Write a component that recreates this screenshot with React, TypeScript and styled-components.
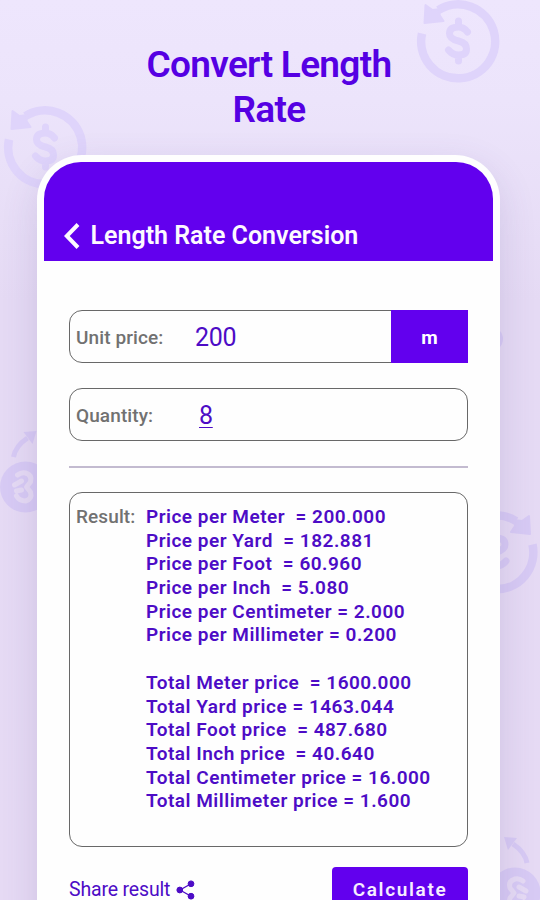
import React from "react";
import styled, { createGlobalStyle } from "styled-components";

const PURPLE = "#6200ee";
const INK = "#4d0cc6";

const GlobalStyle = createGlobalStyle`
  html, body { margin: 0; padding: 0; overflow: hidden; }
  *, *::before, *::after { box-sizing: border-box; }
`;

const Page = styled.main`
  position: relative;
  display: flex;
  flex-direction: column;
  align-items: center;
  width: 540px;
  height: 900px;
  overflow: hidden;
  font-family: Roboto, "Liberation Sans", sans-serif;
  background: linear-gradient(180deg, #eee6fd 0, #ece4fb 100px, #e5daf4 300px, #e6daf4 100%);
`;

const Decoration = styled.svg`
  position: absolute;
  inset: 0;
  width: 540px;
  height: 900px;
`;

const Headline = styled.h1`
  position: relative;
  flex-shrink: 0;
  margin: 42px 2px 0 0;
  width: 280px;
  height: 113px;
  text-align: center;
  font-size: 37px;
  line-height: 45px;
  font-weight: 600;
  letter-spacing: -0.7px;
  color: #5500e3;
`;

const Phone = styled.section`
  position: relative;
  display: flex;
  flex-direction: column;
  width: 463px;
  height: 800px;
  flex-shrink: 0;
  margin-right: 3px;
  padding: 7px 7px 0;
  background: #fefefe;
  border-radius: 45px 45px 0 0;
  box-shadow: 0 12px 36px rgba(90, 70, 140, 0.16);
`;

const AppBar = styled.header`
  display: flex;
  align-items: flex-end;
  height: 99px;
  padding: 0 0 9px 18px;
  gap: 9.5px;
  background: ${PURPLE};
  border-radius: 37px 37px 0 0;
`;

const BackIcon = styled.svg`
  width: 19px;
  height: 32px;
`;

const Title = styled.h2`
  margin: 0;
  font-size: 25px;
  line-height: 32px;
  font-weight: 600;
  color: #fdf9ff;
  white-space: nowrap;
`;

const Content = styled.div`
  display: flex;
  flex-direction: column;
  padding: 49px 25px 0 25px;
`;

const Label = styled.span<{ $width: number }>`
  width: ${(p) => p.$width}px;
  flex-shrink: 0;
  font-size: 19px;
  line-height: 24px;
  font-weight: 500;
  letter-spacing: 0.1px;
  color: #717171;
  white-space: nowrap;
`;

const Value = styled.span<{ $underlined?: boolean }>`
  flex: 1;
  font-size: 25px;
  line-height: 30px;
  letter-spacing: -0.3px;
  color: ${INK};
  text-decoration: ${(p) => (p.$underlined ? "underline" : "none")};
  text-decoration-thickness: 1px;
  text-underline-offset: 3px;
`;

const Field = styled.div`
  display: flex;
  align-items: center;
  height: 53px;
  margin-bottom: 25px;
  padding-left: 6px;
  border: 1.5px solid #686868;
  border-radius: 13px;

  ${Label}, ${Value} {
    padding-top: 2px;
  }
`;

const Unit = styled.div`
  display: flex;
  align-items: center;
  justify-content: center;
  width: 77px;
  height: 53px;
  padding-top: 2px;
  margin-right: -1px;
  flex-shrink: 0;
  background: ${PURPLE};
  color: #fff;
  font-size: 19px;
  font-weight: 700;
`;

const Divider = styled.hr`
  width: 100%;
  height: 2px;
  margin: 0 0 24px;
  border: 0;
  background: #c3bbd0;
`;

const ResultBox = styled.div`
  display: flex;
  height: 355px;
  padding: 12px 0 0 6px;
  border: 1.5px solid #686868;
  border-radius: 13px;
`;

const Lines = styled.div`
  display: flex;
  flex-direction: column;
`;

const Line = styled.span`
  height: 23.7px;
  font-size: 19px;
  line-height: 23.7px;
  font-weight: 600;
  letter-spacing: 0.5px;
  color: ${INK};
  white-space: pre;
`;

const Actions = styled.div`
  display: flex;
  justify-content: space-between;
  margin-top: 20px;
`;

const Share = styled.div`
  display: flex;
  align-items: center;
  gap: 6px;
  height: 45px;
  font-size: 19.5px;
  line-height: 20px;
  letter-spacing: -0.16px;
  color: ${INK};
`;

const ShareIcon = styled.svg`
  width: 19px;
  height: 20px;
`;

const Calculate = styled.button`
  width: 136px;
  height: 46px;
  padding: 0;
  border: 0;
  border-radius: 4px;
  background: ${PURPLE};
  color: #f6edff;
  font: 600 19px/20px Roboto, sans-serif;
  letter-spacing: 1.65px;
`;

const results = [
  "Price per Meter  = 200.000",
  "Price per Yard  = 182.881",
  "Price per Foot  = 60.960",
  "Price per Inch  = 5.080",
  "Price per Centimeter = 2.000",
  "Price per Millimeter = 0.200",
  "",
  "Total Meter price  = 1600.000",
  "Total Yard price = 1463.044",
  "Total Foot price  = 487.680",
  "Total Inch price  = 40.640",
  "Total Centimeter price = 16.000",
  "Total Millimeter price = 1.600",
];

const DollarMark = () => (
  <path d="M9 -9 Q5 -14 0 -14 Q-9 -14 -9 -7.5 Q-9 -2 0 0 Q8 2 8 8 Q8 14 0 14 Q-6 14 -10 9 M0 -20 V-14 M0 14 V20" />
);

const Refund = ({ transform }: { transform: string }) => (
  <g transform={transform} fill="none" stroke="currentColor" strokeWidth="8.5">
    <path d="M-36.5 -7.5 A37 37 0 1 0 -20 -31" />
    <path d="M-33 -36 L-34 -18 L-15 -20 L-19 -26 L-18 -32 L-26 -31 Z" fill="currentColor" strokeWidth="2" strokeLinejoin="round" />
    <g strokeWidth="7" strokeLinecap="round" strokeLinejoin="round"><DollarMark /></g>
  </g>
);

const Coin = ({ transform }: { transform: string }) => (
  <g transform={transform} fill="none" stroke="currentColor">
    <circle r="25.5" fill="currentColor" stroke="none" />
    <path
      d="M-8 -12 Q-4 -15 0 -14 Q7 -12 5 -5 L1 0 L5 5 Q7 12 0 14 Q-6 14 -9 9 M-11 -2 L-4 -6 M-9 4 L-4 3"
      stroke="#e5daf4"
      strokeWidth="5"
      strokeLinecap="round"
      strokeLinejoin="round"
    />
    <path d="M-12 -30 Q-10 -41 2 -49" strokeWidth="5" />
    <path d="M-2 -55 L11 -56 L7 -43 Z" fill="currentColor" stroke="none" />
  </g>
);

export default function App() {
  return (
    <>
      <GlobalStyle />
      <Page>
        <Decoration viewBox="0 0 540 900" aria-hidden="true">
          <g color="#dfd4fb">
            <Refund transform="translate(458.5 41)" />
            <Refund transform="translate(45.5 147)" />
          </g>
          <g color="#d7caf4">
            <Refund transform="translate(496 552) scale(-1 1)" />
            <Coin transform="translate(25.5 487)" />
            <Coin transform="translate(515 893) scale(-1 1)" />
            <circle cx="491" cy="339" r="12" fill="currentColor" />
          </g>
        </Decoration>
        <Headline>Convert Length Rate</Headline>
        <Phone>
          <AppBar>
            <BackIcon viewBox="0 0 19 32" fill="none" stroke="#fdf9ff" strokeWidth="4">
              <path d="M16 4.5 L4.8 16 L16 27.5" />
            </BackIcon>
            <Title>Length Rate Conversion</Title>
          </AppBar>
          <Content>
            <Field>
              <Label $width={119}>Unit price:</Label>
              <Value>200</Value>
              <Unit>m</Unit>
            </Field>
            <Field>
              <Label $width={123}>Quantity:</Label>
              <Value $underlined>8</Value>
            </Field>
            <Divider />
            <ResultBox>
              <Label $width={70}>Result:</Label>
              <Lines>
                {results.map((text, i) => (
                  <Line key={i}>{text}</Line>
                ))}
              </Lines>
            </ResultBox>
            <Actions>
              <Share>
                Share result
                <ShareIcon viewBox="0 0 19 20" fill={INK} stroke={INK}>
                  <path d="M15.5 3.5 L4 10 L15.5 16.5" fill="none" strokeWidth="1.3" />
                  <circle cx="15" cy="3.8" r="2.9" />
                  <circle cx="3.8" cy="10" r="2.9" />
                  <circle cx="15" cy="16.2" r="2.9" />
                </ShareIcon>
              </Share>
              <Calculate>Calculate</Calculate>
            </Actions>
          </Content>
        </Phone>
      </Page>
    </>
  );
}
